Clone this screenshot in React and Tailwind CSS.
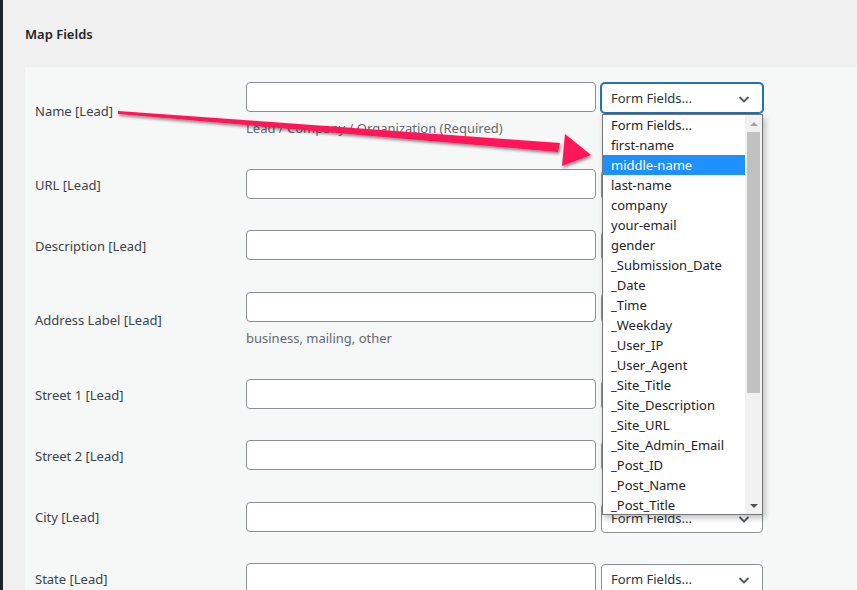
import React from 'react';

const rows = [
  { label: 'Name [Lead]', desc: 'Lead / Company / Organization (Required)' },
  { label: 'URL [Lead]' },
  { label: 'Description [Lead]' },
  { label: 'Address Label [Lead]', desc: 'business, mailing, other' },
  { label: 'Street 1 [Lead]' },
  { label: 'Street 2 [Lead]' },
  { label: 'City [Lead]' },
  { label: 'State [Lead]' },
];

const options = [
  'Form Fields...', 'first-name', 'middle-name', 'last-name', 'company', 'your-email', 'gender',
  '_Submission_Date', '_Date', '_Time', '_Weekday', '_User_IP', '_User_Agent', '_Site_Title',
  '_Site_Description', '_Site_URL', '_Site_Admin_Email', '_Post_ID', '_Post_Name', '_Post_Title',
];

const Chevron = () => (
  <svg width="16" height="16" viewBox="0 0 16 16" className="absolute right-[10px] top-[7px]">
    <path d="M3.5 6l4.5 4.5L12.5 6" fill="none" stroke="#50575e" strokeWidth="1.8" />
  </svg>
);

const FieldSelect = ({ focused }) => (
  <div
    className={`relative top-[1px] ml-[5px] w-[162px] h-[30px] rounded-[4px] bg-white border text-[13px] leading-[28px] pl-[9px] text-[#2c3338] ${
      focused ? 'border-[#2271b1] shadow-[0_0_0_1px_#2271b1]' : 'border-[#8c8f94]'
    }`}
  >
    Form Fields...
    <Chevron />
  </div>
);

const Row = ({ row, index }) => (
  <div className="flex items-center">
    <div className="w-[221px] pl-[10px] pt-[3px] text-[13px] text-[#3c434a]">{row.label}</div>
    <div
      className={`flex flex-col ${
        index === 0 ? 'pt-[15px] pb-[15.33px]' : 'py-[15.67px]'
      }`}
    >
      <div className="flex items-start h-[30px]">
        <div className="w-[350px] h-[30px] rounded-[4px] bg-white border border-[#8c8f94]" />
        <FieldSelect focused={index === 0} />
      </div>
      {row.desc && (
        <div className="mt-[6px] text-[13px] leading-[20px] text-[#646970]">{row.desc}</div>
      )}
    </div>
  </div>
);

const Dropdown = () => (
  <div className="absolute left-[602px] top-[114px] w-[161px] h-[401px] bg-white border border-[#767676] shadow-[2px_3px_6px_rgba(0,0,0,0.25)] flex">
    <div className="flex-1">
      {options.map((o, i) => (
        <div
          key={o}
          className={`h-[20px] leading-[20px] pl-[8px] text-[13px] ${
            i === 2 ? 'bg-[#1e90ff] text-white' : 'text-[#1d2327]'
          }`}
        >
          {o}
        </div>
      ))}
    </div>
    <div className="w-[17px] bg-[#f1f1f1] flex flex-col items-center">
      <div className="h-[17px] flex items-center justify-center">
        <div className="w-0 h-0 border-l-[4px] border-r-[4px] border-b-[4px] border-l-transparent border-r-transparent border-b-[#a3a3a3]" />
      </div>
      <div className="w-[13px] h-[261px] bg-[#c1c1c1]" />
      <div className="flex-1" />
      <div className="h-[17px] flex items-center justify-center">
        <div className="w-0 h-0 border-l-[4px] border-r-[4px] border-t-[4px] border-l-transparent border-r-transparent border-t-[#505050]" />
      </div>
    </div>
  </div>
);

const Arrow = () => (
  <svg className="absolute left-0 top-0 pointer-events-none" width="857" height="590">
    <defs>
      <filter id="sh" x="-10%" y="-50%" width="120%" height="200%">
        <feDropShadow dx="1" dy="2" stdDeviation="1.6" floodColor="#000" floodOpacity="0.45" />
      </filter>
    </defs>
    <g filter="url(#sh)" fill="#ff1659">
      <polygon points="118,111 560,143 558,152 118,114" />
      <polygon points="565,134 591,155 562,166" />
    </g>
  </svg>
);

export default function App() {
  return (
    <div
      className="relative w-[857px] h-[590px] overflow-hidden bg-[#f0f0f1] flex"
      style={{ fontFamily: '"Noto Sans", "Open Sans", sans-serif' }}
    >
      <div className="w-[3px] h-full bg-[#1d2327]" />
      <div className="flex-1 pl-[22px]">
        <h2 className="pt-[24px] h-[67px] text-[13px] leading-[20px] font-semibold text-[#1d2327]">Map Fields</h2>
        <div className="bg-[#f6f7f7] h-[600px]">
          {rows.map((r, i) => (
            <Row key={r.label} row={r} index={i} />
          ))}
        </div>
      </div>
      <Dropdown />
      <Arrow />
    </div>
  );
}
